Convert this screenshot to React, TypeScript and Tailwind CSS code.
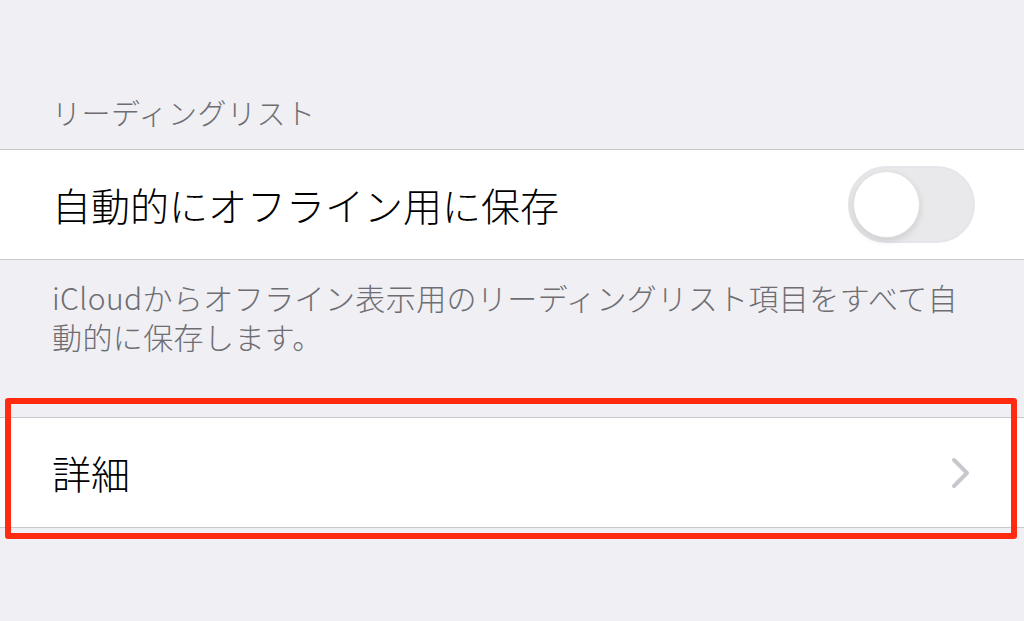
const jp = { fontFamily: '"Noto Sans CJK JP", "Noto Sans", sans-serif' };

function Toggle() {
  return (
    <div className="relative w-[127px] h-[77px] rounded-full bg-[#e9e9eb] border-[2px] border-[#e5e5ea]">
      <div className="absolute left-[3px] top-[3px] w-[67px] h-[67px] rounded-full bg-white border border-[#e0e0e0] shadow-[0_3px_7px_rgba(0,0,0,0.12)]" />
    </div>
  );
}

function Chevron() {
  return (
    <svg width="20" height="32" viewBox="0 0 20 32" fill="none">
      <polyline
        points="3,3 16,16 3,29"
        stroke="#c7c7cc"
        strokeWidth="4"
        strokeLinecap="round"
        strokeLinejoin="round"
      />
    </svg>
  );
}

export default function App() {
  return (
    <div className="relative w-[1024px] h-[621px] overflow-hidden bg-[#efeff4]" style={jp}>
      {/* group header */}
      <div className="pt-[94px] pb-[19px] px-[52px] text-[29px] leading-[36px] tracking-[0.5px] text-[#6d6d72] font-light">
        リーディングリスト
      </div>

      <div className="h-[111px] bg-white border-y border-[#c8c7cc] flex items-center justify-between pl-[52px] pr-[49px]">
        <span className="text-[39px] text-black leading-none font-light">自動的にオフライン用に保存</span>
        <Toggle />
      </div>

      {/* footer */}
      <div className="pt-[18px] px-[52px] text-[30px] leading-[39px] tracking-[0.4px] text-[#6d6d72] font-light">
        iCloudからオフライン表示用のリーディングリスト項目をすべて自
        <br />
        動的に保存します。
      </div>

      <div className="mt-[61px] h-[111px] bg-white border-y border-[#c8c7cc] flex items-center justify-between pl-[52px] pr-[53px]">
        <span className="text-[39px] text-black leading-none font-light">詳細</span>
        <Chevron />
      </div>

      {/* annotation */}
      <div className="absolute left-[5px] top-[398px] w-[1012px] h-[141px] border-[6px] border-[#ff2a0f] rounded-[3px]" />
    </div>
  );
}
